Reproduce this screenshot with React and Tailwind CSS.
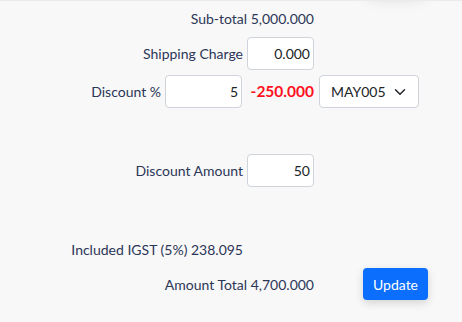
import React from "react";

function Input({ value, w = "w-[67px]" }) {
  return (
    <div className={`${w} h-[33px] bg-white border border-[#ced4da] rounded-[4px] flex items-center justify-end pr-[3px] text-[14px] text-[#212529]`}>
      {value}
    </div>
  );
}

export default function App() {
  return (
    <div className="relative w-[462px] h-[322px] overflow-hidden bg-[#f8f8f8] border-t border-[#ebebeb] font-['Lato',sans-serif] text-[14px] text-[#2c3657]">
      <div className="absolute left-[362px] top-[-40px] w-[68px] h-[34px] rounded-full bg-[#f8f8f8] shadow-[0_2px_16px_rgba(0,0,0,0.16)]" />
      <div className="pt-[7px]">
        <div className="flex h-[20px] items-center">
          <div className="w-[314px] text-right">Sub-total 5,000.000</div>
        </div>
        <div className="flex mt-[9px] h-[33px] items-center">
          <div className="w-[243px] flex justify-end">Shipping Charge</div>
          <div className="ml-[4px]"><Input value="0.000" /></div>
        </div>
        <div className="flex mt-[5px] h-[33px] items-center">
          <div className="w-[242px] flex justify-end items-center gap-[4px]">
            <span>Discount %</span>
            <Input value="5" w="w-[77px]" />
          </div>
          <div className="w-[72px] text-right font-bold text-[15.5px] text-[#ff1020]">-250.000</div>
          <div className="ml-[5px] w-[100px] h-[33px] bg-white border border-[#ced4da] rounded-[4px] flex items-center pl-[11px] pr-[12px] justify-between text-[#212529]">
            <span>MAY005</span>
            <svg width="12" height="12" viewBox="0 0 16 16" fill="none" stroke="#212529" strokeWidth="2" strokeLinecap="round" strokeLinejoin="round">
              <path d="M2 5l6 6 6-6" />
            </svg>
          </div>
        </div>
        <div className="flex mt-[46px] h-[33px] items-center">
          <div className="w-[243px] flex justify-end">Discount Amount</div>
          <div className="ml-[4px]"><Input value="50" /></div>
        </div>
        <div className="flex mt-[52px] h-[20px] items-center">
          <div className="w-[243px] text-right">Included IGST (5%) 238.095</div>
        </div>
        <div className="flex mt-[9px] h-[32px] items-center">
          <div className="w-[314px] text-right">Amount Total 4,700.000</div>
          <button className="ml-[49px] w-[65px] h-[32px] rounded-[4px] bg-[#0b6efd] text-white text-[14px] shadow-[0_3px_8px_rgba(0,0,0,0.15)]">Update</button>
        </div>
      </div>
    </div>
  );
}
